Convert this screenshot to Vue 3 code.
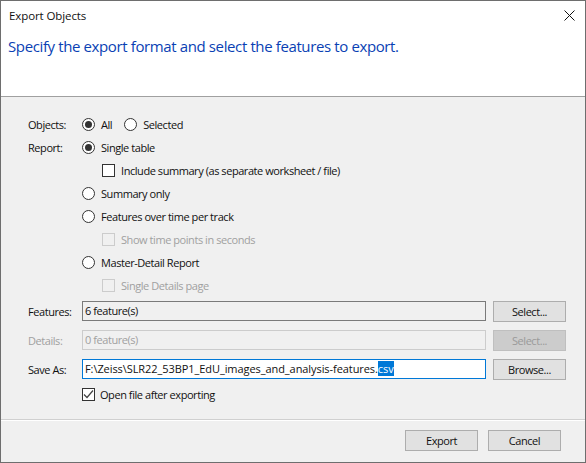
<script setup>
const reportOptions = [
  { label: 'Single table', checked: true, sub: { label: 'Include summary (as separate worksheet / file)', enabled: true } },
  { label: 'Summary only' },
  { label: 'Features over time per track', sub: { label: 'Show time points in seconds' } },
  { label: 'Master-Detail Report', sub: { label: 'Single Details page' } },
]
</script>

<template>
  <div class="dialog">
    <header class="head">
      <div class="titlebar">
        <span class="title">Export Objects</span>
        <svg class="close" width="11" height="11" viewBox="0 0 11 11">
          <path d="M0.5 0.5L10.5 10.5M10.5 0.5L0.5 10.5" stroke="#111" stroke-width="1" fill="none" />
        </svg>
      </div>
      <p class="instruction">Specify the export format and select the features to export.</p>
    </header>

    <main class="body">
      <div class="row">
        <span class="label">Objects:</span>
        <span class="radio on"></span>
        <span class="opt-text">All</span>
        <span class="radio second"></span>
        <span class="opt-text">Selected</span>
      </div>

      <div class="report">
        <span class="label report-label">Report:</span>
        <div class="report-list">
          <template v-for="opt in reportOptions" :key="opt.label">
            <div class="row">
              <span :class="['radio', { on: opt.checked }]"></span>
              <span class="opt-text">{{ opt.label }}</span>
            </div>
            <div v-if="opt.sub" :class="['row', 'sub', { off: !opt.sub.enabled }]">
              <span class="check"></span>
              <span class="opt-text">{{ opt.sub.label }}</span>
            </div>
          </template>
        </div>
      </div>

      <div class="fields">
        <span class="label">Features:</span>
        <div class="field readonly">6 feature(s)</div>
        <button class="btn">Select...</button>

        <span class="label off">Details:</span>
        <div class="field disabled">0 feature(s)</div>
        <button class="btn btn-disabled">Select...</button>

        <span class="label">Save As:</span>
        <div class="field focus">F:\Zeiss\SLR22_53BP1_EdU_images_and_analysis-features.<span class="selection">csv</span></div>
        <button class="btn">Browse...</button>
      </div>

      <div class="open-row">
        <span class="check checked">
          <svg width="11" height="11" viewBox="0 0 11 11">
            <path d="M1 5.5L4 8.5L10 1.5" stroke="#444" stroke-width="1.2" fill="none" />
          </svg>
        </span>
        <span class="opt-text">Open file after exporting</span>
      </div>
    </main>

    <footer class="foot">
      <button class="btn">Export</button>
      <button class="btn">Cancel</button>
    </footer>
  </div>
</template>

<style>
html,
body {
  margin: 0;
  background: #f0f0f0;
}
</style>

<style scoped>
.dialog {
  width: 586px;
  height: 463px;
  box-sizing: border-box;
  border: 1px solid #6e6e6e;
  display: flex;
  flex-direction: column;
  background: #f0f0f0;
  font-family: "Open Sans", "Liberation Sans", sans-serif;
  font-size: 11px;
  letter-spacing: -0.44px;
  color: #111;
  overflow: hidden;
}

.head {
  height: 95px;
  flex: none;
  background: #fff;
  border-bottom: 1px solid #a0a0a0;
}

.titlebar {
  display: flex;
  align-items: center;
  justify-content: space-between;
  height: 29px;
  padding: 0 10px 0 8px;
}

.title {
  font-size: 11.5px;
  letter-spacing: -0.1px;
  color: #111;
}

.instruction {
  margin: 0;
  padding: 5px 0 0 7px;
  font-size: 15px;
  letter-spacing: -0.38px;
  line-height: 22px;
  color: #0a3fb4;
}

.body {
  flex: 1;
  padding: 16px 19px 0 27px;
}

.row {
  display: flex;
  align-items: center;
  height: 23px;
}

.label {
  width: 54px;
  flex: none;
}

.off,
.off .opt-text {
  color: #a0a0a0;
}

.report {
  display: flex;
}

.report-label {
  line-height: 23px;
}

.radio {
  width: 13px;
  height: 13px;
  box-sizing: border-box;
  border: 1px solid #333;
  border-radius: 50%;
  background: #fff;
  position: relative;
  margin-right: 6px;
  flex: none;
}

.radio.on::after {
  content: "";
  position: absolute;
  inset: 2px;
  border-radius: 50%;
  background: #333;
}

.radio.second {
  margin-left: 12px;
}

.sub {
  padding-left: 20px;
}

.check {
  width: 13px;
  height: 13px;
  box-sizing: border-box;
  border: 1px solid #333;
  background: #fff;
  margin-right: 6px;
  flex: none;
  display: flex;
  align-items: center;
  justify-content: center;
}

.off .check {
  border-color: #ccc;
  background: #f0f0f0;
}

.fields {
  display: grid;
  grid-template-columns: 54px 404px 73px;
  column-gap: 0;
  row-gap: 8px;
  margin-top: 4px;
  align-items: center;
}

.fields .btn {
  margin-left: 7px;
}

.field {
  height: 20px;
  align-self: start;
  box-sizing: border-box;
  border: 1px solid #7a7a7a;
  padding-left: 2px;
  line-height: 17px;
  white-space: nowrap;
  overflow: hidden;
}

.field.disabled {
  border-color: #ccc;
  color: #a0a0a0;
}

.field.focus {
  border-color: #0078d7;
  background: #fff;
  letter-spacing: -0.07px;
}

.selection {
  background: #0078d7;
  color: #fff;
}

.btn {
  width: 73px;
  height: 21px;
  box-sizing: border-box;
  padding: 0;
  border: 1px solid #adadad;
  background: #e1e1e1;
  color: #111;
  font: inherit;
  letter-spacing: inherit;
}

.btn-disabled {
  background: #ccc;
  border-color: #bfbfbf;
  color: #9a9a9a;
}

.open-row {
  display: flex;
  align-items: center;
  height: 15px;
  margin: 7px 0 0 54px;
}

.open-row .check {
  margin-right: 5px;
}

.foot {
  flex: none;
  height: 43px;
  box-sizing: border-box;
  border-top: 1px solid #d0d0d0;
  box-shadow: inset 0 1px 0 #fff;
  display: flex;
  justify-content: flex-end;
  gap: 10px;
  padding: 10px 24px 0 0;
}
</style>
